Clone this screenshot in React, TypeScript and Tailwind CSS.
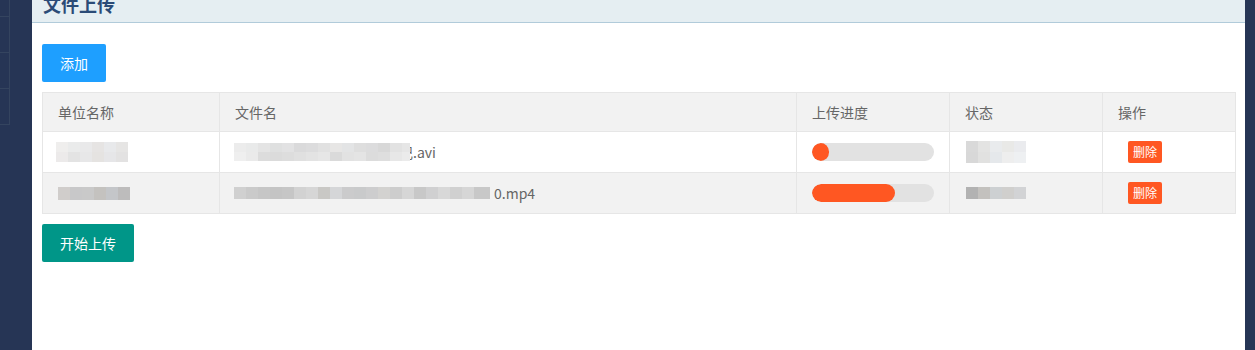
import React from "react";

type Cell = { w: number; c: string };

const Mosaic: React.FC<{ rows: Cell[][]; h: number; className?: string }> = ({ rows, h, className }) => (
  <div className={`flex flex-col ${className ?? ""}`}>
    {rows.map((row, i) => (
      <div key={i} className="flex">
        {row.map((cell, j) => (
          <div key={j} style={{ width: cell.w, height: h, background: cell.c }} />
        ))}
      </div>
    ))}
  </div>
);

const mk = (colors: string[], w = 12): Cell[] => colors.map((c) => ({ w, c }));

const rowsData = [
  {
    unit: (
      <Mosaic
        h={10}
        className="rounded-l-lg blur-[0.5px]"
        rows={[
          mk(["#efeeed", "#eaebeb", "#e9e9ea", "#e6e4e3", "#e8e9eb", "#e6e5e4"]),
          mk(["#eceaea", "#e3e3e3", "#e7e7e8", "#e5e3e1", "#e6e6e8", "#e3e2e2"]),
        ]}
      />
    ),
    file: (
      <div className="flex items-center">
        <Mosaic
          h={9}
          className="relative z-10 rounded-lg blur-[0.5px]"
          rows={[
            [...mk(["#ececec", "#e9eaea", "#e4e4e4", "#dfe0e0", "#e2e2e3", "#dadadb", "#dcdcdd", "#e1e1e1", "#e7e6e5", "#e3e4e5", "#dedede", "#dcdcdd", "#d8d8d8", "#e2e2e2"]), { w: 8, c: "#e6e6e6" }],
            [...mk(["#efefef", "#eaeaea", "#dcdcdc", "#dbdbdb", "#dddddd", "#e0e0e0", "#e3e3e3", "#e6e6e6", "#dadada", "#e2e2e2", "#e4e4e4", "#dcdcdc", "#dedede", "#e7e7e7"]), { w: 8, c: "#ebebeb" }],
          ]}
        />
        <span className="-ml-[11px]">记.avi</span>
      </div>
    ),
    progress: 17,
    status: (
      <Mosaic
        h={11}
        className="rounded-l-lg blur-[0.5px]"
        rows={[
          mk(["#d9d9d9", "#e3e3e2", "#e9ebed", "#e9e9e7", "#eaebee"]),
          mk(["#d8d8d8", "#e1e1e0", "#e5e8eb", "#eeeeee", "#eef0f2"]),
        ]}
      />
    ),
    striped: false,
  },
  {
    unit: (
      <Mosaic
        h={13}
        className="ml-[2px] blur-[0.3px]"
        rows={[mk(["#d0cdcb", "#c8c8c9", "#c9c9c9", "#c4c2bf", "#c4c6c9", "#bdbcbc"])]}
      />
    ),
    file: (
      <div className="flex items-center">
        <Mosaic
          h={12}
          className="blur-[0.3px]"
          rows={[
            [
              ...mk([
                "#d0d0d0", "#cacaca", "#c6c6c6", "#c4c4c4", "#c6c6c6", "#d2d2d2", "#d6d6d6", "#c9c8c5", "#d5d6d8", "#cbcbcc", "#c9cacb", "#cdcdce", "#d3d2d0", "#cdcdcd", "#d6d6d6", "#c8c8c8", "#d0d0d1", "#d8d8d8", "#d0d0d0", "#d6d6d6",
              ]),
              { w: 16, c: "#c8c8c8" },
            ],
          ]}
        />
        <span className="ml-[4px]">0.mp4</span>
      </div>
    ),
    progress: 83,
    status: (
      <Mosaic
        h={12}
        className="blur-[0.3px]"
        rows={[mk(["#b2b2b2", "#c3c1be", "#cdd0d2", "#d0cfcd", "#d2d3d5"])]}
      />
    ),
    striped: true,
  },
];

export default function App() {
  return (
    <div
      className="flex h-[350px] w-[1255px] bg-[#263555]"
      style={{ fontFamily: '"Noto Sans CJK SC", "Liberation Sans", sans-serif' }}
    >
      {/* sidebar edge */}
      <div className="w-[32px] shrink-0">
        <div className="flex w-[10px] flex-col border-r border-[#34445f]">
          {[17, 36, 36, 36].map((h, i) => (
            <div key={i} style={{ height: h }} className="border-b border-[#34445f]" />
          ))}
        </div>
      </div>

      <div className="flex w-[1213px] flex-col bg-white">
        <div className="h-[23px] overflow-hidden border-b border-[#b1cbda] bg-[#e5eef2] pl-[11px]">
          <h2 className="-mt-[8px] text-[18px] font-bold leading-[24px] text-[#2b4b77]">文件上传</h2>
        </div>

        <div className="px-[10px] pt-[21px]">
          <button className="h-[38px] w-[64px] rounded-[2px] bg-[#1e9fff] text-[14px] text-white">添加</button>

          <table className="mt-[10px] w-[1193px] table-fixed border-collapse text-[14px] text-[#666]">
            <colgroup>
              <col style={{ width: 177 }} />
              <col style={{ width: 577 }} />
              <col style={{ width: 153 }} />
              <col style={{ width: 153 }} />
              <col style={{ width: 133 }} />
            </colgroup>
            <thead>
              <tr className="h-[39px] bg-[#f2f2f2]">
                {["单位名称", "文件名", "上传进度", "状态", "操作"].map((t) => (
                  <th key={t} className="border border-[#e6e6e6] px-[15px] text-left font-normal">
                    {t}
                  </th>
                ))}
              </tr>
            </thead>
            <tbody>
              {rowsData.map((r, i) => (
                <tr key={i} className={`h-[41px] ${r.striped ? "bg-[#f2f2f2]" : "bg-white"}`}>
                  <td className="border border-[#e6e6e6] pl-[13px]">{r.unit}</td>
                  <td className="border border-[#e6e6e6] pl-[14px]">{r.file}</td>
                  <td className="border border-[#e6e6e6] px-[15px]">
                    <div className="h-[18px] w-[122px] overflow-hidden rounded-full bg-[#e2e2e2]">
                      <div className="h-full rounded-full bg-[#ff5722]" style={{ width: r.progress }} />
                    </div>
                  </td>
                  <td className="border border-[#e6e6e6] pl-[16px]">{r.status}</td>
                  <td className="border border-[#e6e6e6] pl-[25px]">
                    <button className="h-[22px] w-[34px] rounded-[2px] bg-[#ff5722] text-[12px] leading-[22px] text-white">
                      删除
                    </button>
                  </td>
                </tr>
              ))}
            </tbody>
          </table>

          <button className="mt-[10px] h-[38px] w-[92px] rounded-[2px] bg-[#009688] text-[14px] text-white">
            开始上传
          </button>
        </div>
      </div>

      <div className="flex-1" />
    </div>
  );
}
